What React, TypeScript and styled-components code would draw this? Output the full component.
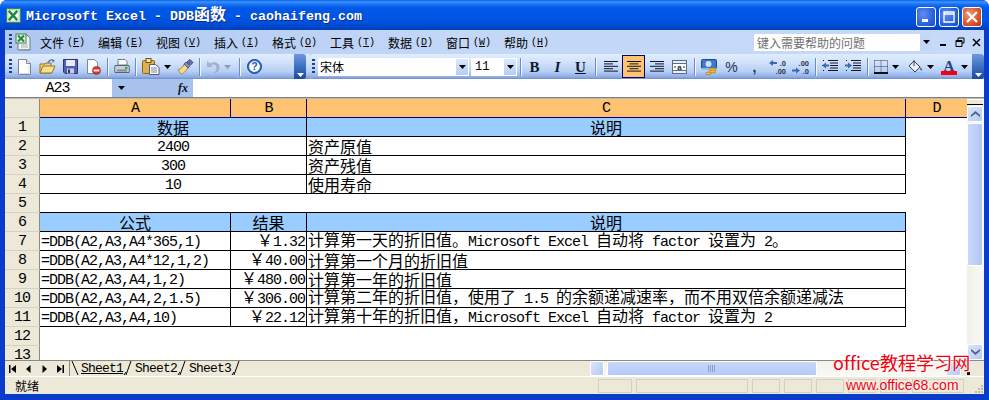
import React from 'react';
import styled, { createGlobalStyle } from 'styled-components';

const GlobalStyle = createGlobalStyle`
	html, body {
		margin: 0;
		width: 989px;
		height: 400px;
		overflow: hidden;
		background: #fff;
	}
`;

const CJK = '"Noto Sans CJK SC", "Liberation Sans", sans-serif';
const MONO = '"Liberation Mono", "Noto Sans CJK SC", monospace';
const BLUE_EDGE = '#0a3ccb';
const BEIGE = '#ece9d8';

/* ---------- window frame ---------- */

const Window = styled.div`
	position: relative;
	width: 989px;
	height: 400px;
	display: flex;
	flex-direction: column;
	overflow: hidden;
	background: ${BLUE_EDGE};
	border-radius: 7px 7px 0 0;
	font-family: ${CJK};
`;

const TitleBar = styled.div`
	height: 30px;
	flex: none;
	display: flex;
	align-items: center;
	padding: 0 7px 0 6px;
	background: linear-gradient(
		180deg,
		#0a5fe6 0,
		#3c95ff 2px,
		#1c74f4 4px,
		#0058e6 8px,
		#0054e3 20px,
		#0049cf 26px,
		#003fb8 30px
	);
`;

const TitleText = styled.div`
	flex: 1;
	margin-left: 5px;
	color: #fff;
	font-weight: bold;
	font-size: 16px;
	line-height: 20px;
	white-space: pre;
	text-shadow: 1px 1px 0 #0c2a8e;
`;

const WinButtons = styled.div`
	display: flex;
	gap: 3px;
	margin-top: 3px;
`;

const WinButton = styled.div<{ $close?: boolean }>`
	width: 20px;
	height: 20px;
	box-sizing: border-box;
	border: 1px solid #fff;
	border-radius: 3px;
	display: flex;
	align-items: center;
	justify-content: center;
	background: ${p =>
		p.$close
			? 'radial-gradient(circle at 35% 35%, #ee9a7c, #d9532b 60%, #bb3512)'
			: 'radial-gradient(circle at 35% 35%, #5d8ff5, #2b62e0 60%, #1c49c4)'};
`;

const Body = styled.div`
	flex: 1;
	min-height: 0;
	display: flex;
	flex-direction: column;
	margin: 0 5px 6px 5px;
	background: #fff;
`;

/* ---------- menu bar ---------- */

const MenuBar = styled.div`
	height: 24px;
	flex: none;
	display: flex;
	align-items: center;
	padding-left: 4px;
	background: linear-gradient(90deg, #aec7f0 0, #c3d7f7 45%, #c6d9f8 100%);
	font-size: 12px;
	color: #000;
`;

const Grip = styled.span<{ $after?: number }>`
	flex: none;
	width: 3px;
	height: 16px;
	margin-right: ${p => p.$after ?? 1}px;
	background: repeating-linear-gradient(180deg, #27417e 0 2px, transparent 2px 4px);
`;

const MenuList = styled.div`
	display: flex;
	margin-left: 8px;
`;

const MenuItem = styled.div`
	width: 58px;
	flex: none;
	display: flex;
	align-items: center;
	white-space: pre;
`;

const MenuKey = styled.span`
	margin-left: 3px;
	font-family: ${MONO};
	font-size: 10px;
`;

const MenuKeyLetter = styled.span`
	text-decoration: underline;
`;

const HelpBox = styled.div`
	width: 178px;
	height: 17px;
	margin-left: auto;
	display: flex;
	align-items: center;
	justify-content: space-between;
	background: #fff;
	color: #6f6f6f;
	font-size: 12px;
	line-height: 17px;
	padding-left: 3px;
	box-sizing: border-box;
`;

const HelpArrow = styled.div`
	width: 12px;
	height: 17px;
	background: #c3d7f7;
	display: flex;
	align-items: center;
	justify-content: center;
`;

const DocButtons = styled.div`
	width: 52px;
	flex: none;
	display: flex;
	align-items: center;
	justify-content: space-around;
	padding-left: 3px;
	box-sizing: border-box;
`;

/* ---------- tool bars ---------- */

const Dock = styled.div`
	height: 25px;
	flex: none;
	display: flex;
	background: #a9c3ee;
`;

const ToolBar = styled.div<{ $width: number; $pad: number }>`
	width: ${p => p.$width}px;
	flex: none;
	box-sizing: border-box;
	display: flex;
	align-items: center;
	padding-left: ${p => p.$pad}px;
	border-radius: 3px 0 0 3px;
	background: linear-gradient(180deg, #e0edfe 0, #cfe1fb 35%, #b6cff5 70%, #8fade3 92%, #6e8ecb 100%);
`;

const Tool = styled.div<{ $width?: number; $on?: boolean }>`
	width: ${p => p.$width ?? 23}px;
	height: 23px;
	flex: none;
	box-sizing: border-box;
	display: flex;
	align-items: center;
	justify-content: center;
	gap: 4px;
	border: 1px solid ${p => (p.$on ? '#000080' : 'transparent')};
	background: ${p => (p.$on ? '#ffc26f' : 'none')};
`;

const ToolSep = styled.div<{ $width?: number }>`
	width: ${p => p.$width ?? 5}px;
	height: 18px;
	flex: none;
	display: flex;
	justify-content: center;
	&::before {
		content: '';
		width: 1px;
		background: #6a8cc8;
		box-shadow: 1px 0 0 #f0f6ff;
	}
`;

const Chevron = styled.div<{ $right?: number }>`
	width: 12px;
	height: 25px;
	flex: none;
	margin-left: auto;
	margin-right: ${p => p.$right ?? 0}px;
	display: flex;
	flex-direction: column;
	align-items: center;
	justify-content: flex-end;
	padding-bottom: 2px;
	box-sizing: border-box;
	border-radius: 0 3px 3px 0;
	background: linear-gradient(180deg, #6f99de 0, #3a6cc0 55%, #1c4a9c 100%);
`;

const Combo = styled.div<{ $width: number; $after?: number }>`
	width: ${p => p.$width}px;
	margin-right: ${p => p.$after ?? 0}px;
	height: 18px;
	flex: none;
	box-sizing: border-box;
	display: flex;
	align-items: center;
	justify-content: space-between;
	background: #fff;
	font-size: 12px;
	padding-left: 2px;
`;

const ComboNumber = styled.span`
	font-family: ${MONO};
	font-size: 12px;
	margin-left: 2px;
`;

const ComboArrow = styled.div`
	width: 12px;
	height: 16px;
	margin-right: 1px;
	background: linear-gradient(180deg, #dbe8fc, #b4cdf4);
	display: flex;
	align-items: center;
	justify-content: center;
`;

const StyleLetter = styled.span<{ $italic?: boolean; $under?: boolean }>`
	font-family: "Liberation Serif", serif;
	font-size: 15px;
	line-height: 16px;
	font-weight: bold;
	font-style: ${p => (p.$italic ? 'italic' : 'normal')};
	text-decoration: ${p => (p.$under ? 'underline' : 'none')};
	color: #10182c;
`;

const SansGlyph = styled.span<{ $strong?: boolean }>`
	font-family: "Liberation Sans", sans-serif;
	font-size: 14px;
	font-weight: ${p => (p.$strong ? 'bold' : 'normal')};
	color: #24324f;
`;

/* ---------- formula bar ---------- */

const FormulaBar = styled.div`
	height: 18px;
	flex: none;
	display: flex;
	background: #fff;
	border-bottom: 1px solid #808080;
	box-shadow: 0 1px 0 #bdbab0;
	position: relative;
`;

const NameBox = styled.div`
	width: 107px;
	flex: none;
	display: flex;
	align-items: center;
	justify-content: center;
	padding-right: 2px;
	box-sizing: border-box;
`;

const NameTools = styled.div`
	width: 81px;
	flex: none;
	display: flex;
	align-items: center;
	justify-content: space-between;
	padding: 0 5px 0 6px;
	box-sizing: border-box;
	background: #a8c2ee;
`;

const FxLabel = styled.span`
	font-family: "Liberation Serif", serif;
	font-style: italic;
	font-weight: bold;
	font-size: 12px;
	color: #111;
`;

/* ---------- sheet ---------- */

const SheetArea = styled.div`
	flex: 1;
	min-height: 0;
	display: flex;
	margin-top: 1px;
`;

const Grid = styled.div`
	flex: 1;
	min-width: 0;
	display: grid;
	grid-template-columns: 35px 191px 76px 599px 61px;
	grid-auto-rows: 19px;
	overflow: hidden;
	align-content: start;
`;

const ColHead = styled.div<{ $line?: boolean }>`
	box-sizing: border-box;
	background: #ffc271;
	border-bottom: 1px solid #000080;
	border-right: ${p => (p.$line ? '1px solid #000080' : 'none')};
	display: flex;
	align-items: center;
	justify-content: center;
	white-space: pre;
`;

const Corner = styled.div`
	box-sizing: border-box;
	background: ${BEIGE};
	border-right: 1px solid #8d8a7c;
	border-bottom: 1px solid #d5d2c3;
`;

const RowHead = styled(Corner)`
	display: flex;
	align-items: center;
	justify-content: center;
	white-space: pre;
`;

const Cell = styled.div<{ $span?: number; $fill?: boolean; $align?: string; $right?: boolean; $bottom?: boolean }>`
	grid-column: span ${p => p.$span ?? 1};
	box-sizing: border-box;
	min-width: 0;
	background: ${p => (p.$fill ? '#99ccff' : '#fff')};
	border-right: ${p => (p.$right === false ? 'none' : '1px solid #000')};
	border-bottom: ${p => (p.$bottom === false ? 'none' : '1px solid #000')};
	display: flex;
	align-items: center;
	padding: 0 1px;
	justify-content: ${p => p.$align ?? 'flex-start'};
	font-size: 16px;
	line-height: 18px;
	white-space: pre;
	overflow: hidden;
`;

const Latin = styled.span<{ $size?: number; $track?: number }>`
	font-family: ${MONO};
	font-size: ${p => p.$size ?? 15}px;
	letter-spacing: ${p => p.$track ?? -1}px;
`;

const Han = styled.span`
	font-family: ${CJK};
	font-size: 16px;
`;

/* ---------- scroll bars ---------- */

const VScroll = styled.div`
	width: 17px;
	flex: none;
	display: flex;
	flex-direction: column;
	background: linear-gradient(90deg, #f1f0e8, #faf9f4);
	padding-right: 1px;
	box-sizing: border-box;
`;

const SplitBox = styled.div`
	height: 6px;
	flex: none;
	background: ${BEIGE};
	border-top: 1px solid #fff;
	border-bottom: 1px solid #000;
	box-sizing: border-box;
	margin-bottom: 1px;
`;

const ScrollBtn = styled.div<{ $w?: number; $h?: number }>`
	width: ${p => (p.$w ? `${p.$w}px` : '100%')};
	height: ${p => (p.$h ? `${p.$h}px` : '100%')};
	flex: none;
	box-sizing: border-box;
	border: 1px solid #fff;
	border-radius: 2px;
	background: linear-gradient(135deg, #dbe6fc, #b3c9f4);
	display: flex;
	align-items: center;
	justify-content: center;
`;

const VThumb = styled.div`
	height: 143px;
	flex: none;
	margin-top: 1px;
	box-sizing: border-box;
	border: 1px solid #fff;
	border-radius: 2px;
	background: linear-gradient(90deg, #c9d8fa, #bacdf8 70%, #afc3f2);
`;

const Spacer = styled.div`
	flex: 1;
`;

const TabRow = styled.div`
	height: 17px;
	flex: none;
	display: flex;
	align-items: center;
	box-sizing: border-box;
	background: ${BEIGE};
	border-top: 1px solid #8d8a7c;
	border-bottom: 1px solid #fff;
`;

const TabNav = styled.div`
	width: 65px;
	height: 100%;
	flex: none;
	display: flex;
	align-items: center;
	justify-content: space-around;
	padding: 0 1px 0 0;
	box-sizing: border-box;
	border-right: 1px solid #8d8a7c;
`;

const SheetTab = styled.div<{ $active?: boolean }>`
	width: 42px;
	flex: none;
	font-family: ${MONO};
	font-size: 13px;
	letter-spacing: -0.8px;
	line-height: 15px;
	text-decoration: ${p => (p.$active ? 'underline' : 'none')};
`;

const SlashSvg = styled.svg`
	flex: none;
`;

const HScroll = styled.div`
	margin-left: auto;
	width: 394px;
	height: 15px;
	flex: none;
	display: flex;
	align-items: center;
	background: linear-gradient(180deg, #f2f1ea, #faf9f5);
`;

const HThumb = styled.div`
	width: 210px;
	height: 15px;
	flex: none;
	margin-left: 3px;
	box-sizing: border-box;
	border: 1px solid #fff;
	border-radius: 2px;
	background: linear-gradient(180deg, #c9d8fa, #b4c9f6);
	display: flex;
	align-items: center;
	justify-content: center;
`;

const HRest = styled.div`
	width: 129px;
	flex: none;
`;

const Corner2 = styled.div`
	width: 23px;
	height: 15px;
	flex: none;
	background: ${BEIGE};
	display: flex;
	align-items: flex-end;
`;

/* ---------- status bar ---------- */

const StatusBar = styled.div`
	height: 17px;
	flex: none;
	display: flex;
	align-items: center;
	background: ${BEIGE};
	font-size: 12px;
	padding-left: 10px;
	position: relative;
`;

const StatusPanels = styled.div`
	margin-left: auto;
	height: 14px;
	display: flex;
	gap: 4px;
	margin-right: 20px;
`;

const StatusPanel = styled.div<{ $width: number }>`
	width: ${p => p.$width}px;
	box-sizing: border-box;
	border: 1px solid #d3d1c6;
`;

const ResizeGrip = styled.svg`
	position: absolute;
	right: 0;
	bottom: 0;
`;

const Watermark = styled.div`
	position: absolute;
	left: 833px;
	top: 350px;
	color: #f00012;
	text-shadow: 0 0 2px #fff, 0 0 2px #fff;
	font-family: ${CJK};
	pointer-events: none;
`;

const WatermarkName = styled.div`
	font-size: 18px;
	line-height: 24px;
	letter-spacing: 0.1px;
`;

const WatermarkUrl = styled.div`
	font-family: "Liberation Sans", sans-serif;
	font-size: 14px;
	line-height: 16px;
	margin: 3px 0 0 13px;
`;

/* ---------- small helpers ---------- */

function Mixed({ text, size, track }: { text: string; size?: number; track?: number }) {
	const parts = text.split(/([\u2E80-\uFFFF]+)/).filter(Boolean);
	return (
		<span>
			{parts.map((part, i) =>
				/[\u2E80-\uFFFF]/.test(part) ? (
					<Han key={i}>{part}</Han>
				) : (
					<Latin key={i} $size={size} $track={track}>
						{part}
					</Latin>
				)
			)}
		</span>
	);
}

const DownTri = ({ color = '#000' }: { color?: string }) => (
	<svg width="7" height="4" viewBox="0 0 7 4">
		<path d="M0 0h7L3.5 4z" fill={color} />
	</svg>
);

const ExcelIcon = ({ size = 16 }: { size?: number }) => (
	<svg width={size} height={size} viewBox="0 0 16 16">
		<rect x="0.5" y="0.5" width="15" height="15" fill="#eef6ea" stroke="#3f7f4a" />
		<rect x="2" y="2" width="12" height="12" fill="#fff" stroke="#9cc4a0" />
		<path d="M3 3l9 10M12 3L3 13" stroke="#1f8a3c" strokeWidth="2.6" />
	</svg>
);

const SheetMenuIcon = () => (
	<svg width="17" height="18" viewBox="0 0 17 18">
		<path d="M3 2h9l3 3v12H3z" fill="#f4f4ee" stroke="#6f7a8c" />
		<path d="M5 16h10v1H5z" fill="#8b95a8" />
		<rect x="1" y="1" width="10" height="9" fill="#e7f3e5" stroke="#3f7f4a" />
		<path d="M3 2.5l6 6M9 2.5l-6 6" stroke="#1f8a3c" strokeWidth="2" />
		<path d="M6 12h7M6 14h7" stroke="#a9b1bd" />
	</svg>
);

const NewIcon = () => (
	<svg width="13" height="16" viewBox="0 0 13 16">
		<path d="M.5.5h8l4 4v11H.5z" fill="#fff" stroke="#7d8796" />
		<path d="M8.5.5v4h4" fill="#dfe6f0" stroke="#7d8796" />
		<path d="M11 6v8.5H2" fill="none" stroke="#d5dbe6" />
	</svg>
);

const OpenIcon = () => (
	<svg width="17" height="16" viewBox="0 0 17 16">
		<path d="M1 5h5l1-1h5v10H1z" fill="#f3cf77" stroke="#98731f" />
		<path d="M1 14l3-7h12l-3 7z" fill="#f8df98" stroke="#98731f" />
		<path d="M9 4c1-3 3-3.4 5-3" fill="none" stroke="#4d7fbf" strokeWidth="1.4" />
		<path d="M13 0l3 1.4L13.6 4z" fill="#4d7fbf" />
	</svg>
);

const SaveIcon = () => (
	<svg width="15" height="15" viewBox="0 0 15 15">
		<path d="M.5.5h14v14H2l-1.5-1.5z" fill="#5160b4" stroke="#2b3479" />
		<rect x="3" y="1" width="9" height="6" fill="#e8ebf6" />
		<rect x="4" y="9.5" width="7" height="5" fill="#c8cde4" />
		<rect x="5" y="10.5" width="2" height="3.5" fill="#2b3479" />
	</svg>
);

const PermissionIcon = () => (
	<svg width="14" height="16" viewBox="0 0 14 16">
		<path d="M.5.5h7l3 3v11H.5z" fill="#fff" stroke="#7d8796" />
		<circle cx="9.5" cy="11.5" r="4" fill="#d93a2b" stroke="#8e1b12" strokeWidth=".6" />
		<rect x="6.7" y="10.6" width="5.6" height="1.8" fill="#fff" />
	</svg>
);

const PrintIcon = () => (
	<svg width="16" height="15" viewBox="0 0 16 15">
		<path d="M4 .5h7l2 2V6H4z" fill="#fff" stroke="#707a8a" />
		<path d="M1 6.5h14c.5 3 .5 5 0 7H1c-.5-2-.5-4 0-7z" fill="#c8ced8" stroke="#596273" />
		<rect x="3" y="10.5" width="10" height="2" fill="#7f8999" />
		<rect x="11" y="8" width="2.5" height="2" fill="#22b03a" />
	</svg>
);

const PasteIcon = () => (
	<svg width="18" height="17" viewBox="0 0 18 17">
		<rect x=".5" y="2.5" width="12" height="13" rx="1" fill="#e0b04f" stroke="#8a661c" />
		<rect x="4" y=".5" width="5" height="4" fill="#f1e4b8" stroke="#6b5416" />
		<path d="M7.5 6.5h6l3.5 3v7H7.5z" fill="#fff" stroke="#565d6d" />
		<path d="M9 10h6M9 12h6M9 14h6" stroke="#7d8796" />
	</svg>
);

const PainterIcon = () => (
	<svg width="17" height="16" viewBox="0 0 17 16">
		<path d="M1 11c3-1 5-3 6-6l4 4c-2 3-5 6-7 6z" fill="#f2dc8f" stroke="#a38a3a" />
		<path d="M7 5l2-2 4 4-2 2z" fill="#8e8fc0" stroke="#555785" />
		<path d="M10 3l3-2.5 3 3L13.5 6z" fill="#6b6fae" stroke="#45477a" />
	</svg>
);

const UndoIcon = () => (
	<svg width="14" height="14" viewBox="0 0 14 14">
		<path d="M1 1v6h6L5 5c3-1.5 5.5 0 5.5 3 0 2-1 3.5-3 5 4 0 6-2.5 6-5.500C13.500 3 9 .5 4 3.500z" fill="#a5b0c6" />
	</svg>
);

const HelpIcon = () => (
	<svg width="15" height="15" viewBox="0 0 15 15">
		<circle cx="7.500" cy="7.500" r="7" fill="#2f6fd8" stroke="#1b458f" />
		<circle cx="7.500" cy="7.500" r="5.400" fill="#fff" />
		<text x="7.500" y="11.300" textAnchor="middle" fontFamily="Liberation Sans" fontWeight="bold" fontSize="10.500" fill="#1c54bd">
			?
		</text>
	</svg>
);

const Lines = ({ mode }: { mode: 'left' | 'center' | 'right' }) => {
	const rows = [14, 9, 14, 9, 14];
	return (
		<svg width="14" height="11" viewBox="0 0 14 11">
			{rows.map((w, i) => {
				const x = mode === 'left' ? 0 : mode === 'right' ? 14 - w : (14 - w) / 2;
				return <rect key={i} x={x} y={i * 2.4} width={w} height="1" fill="#101828" />;
			})}
		</svg>
	);
};

const MergeIcon = () => (
	<svg width="15" height="14" viewBox="0 0 15 14">
		<rect x=".5" y=".5" width="14" height="13" fill="#e8eefa" stroke="#5f6c86" />
		<path d="M1 3.500h13M1 10.500h13" stroke="#5f6c86" />
		<rect x="1" y="4" width="13" height="6" fill="#fff" />
		<path d="M2 7h2M11 7h2" stroke="#1c2a48" />
		<text x="7.500" y="9.500" textAnchor="middle" fontFamily="Liberation Sans" fontWeight="bold" fontSize="8" fill="#1c2a48">
			a
		</text>
	</svg>
);

const CurrencyIcon = () => (
	<svg width="16" height="16" viewBox="0 0 16 16">
		<rect x=".5" y=".5" width="15" height="9" rx="1" fill="#3f78c8" stroke="#274b86" />
		<ellipse cx="7.500" cy="5" rx="3" ry="3" fill="#cfe0f6" />
		<path d="M1 9h14l-2 2H1z" fill="#9bb9e4" />
		<ellipse cx="11.500" cy="10.500" rx="3.500" ry="1.400" fill="#f0c040" stroke="#9a7414" strokeWidth=".6" />
		<ellipse cx="11.500" cy="12.500" rx="3.500" ry="1.400" fill="#f0c040" stroke="#9a7414" strokeWidth=".6" />
		<ellipse cx="7.500" cy="14.300" rx="3" ry="1.200" fill="#f0c040" stroke="#9a7414" strokeWidth=".6" />
	</svg>
);

const DecimalIcon = ({ top, bottom, up }: { top: string; bottom: string; up?: boolean }) => (
	<svg width="17" height="14" viewBox="0 0 17 14">
		<g fontFamily="Liberation Sans" fontWeight="bold" fontSize="7.500" fill="#27344f">
			<text x="17" y="6" textAnchor="end">{top}</text>
			<text x="17" y="13.500" textAnchor="end">{bottom}</text>
		</g>
		{up ? (
			<path d="M0 3l4-3v2h4v2H4v2z" fill="#3c68b4" />
		) : (
			<path d="M8 10.500l-4-3v2H0v2h4v2z" fill="#3c68b4" />
		)}
	</svg>
);

const IndentIcon = ({ out }: { out?: boolean }) => (
	<svg width="16" height="13" viewBox="0 0 16 13">
		<path d="M6 .5h10M8 3h8M8 5.500h8M8 8h8M6 10.500h10" stroke="#101828" />
		<path d="M0 5.500h1" stroke="#101828" />
		{out ? <path d="M0 5.500l4-3v2h3v2H4v2z" fill="#3c68b4" /> : <path d="M7 5.500l-4-3v2H0v2h3v2z" fill="#3c68b4" />}
		<path d="M1 .5h2M1 10.500h2" stroke="#101828" strokeDasharray="1 1" />
	</svg>
);

const BorderIcon = () => (
	<svg width="14" height="14" viewBox="0 0 14 14">
		<path d="M.5.5h13v12M.5.500v12M7 .5v12M.5 6.500h13" fill="none" stroke="#3a3f4a" strokeDasharray="1 1" />
		<rect x="0" y="12" width="14" height="2" fill="#111" />
	</svg>
);

const FillIcon = () => (
	<svg width="16" height="16" viewBox="0 0 16 16">
		<path d="M7 2l6 6-5 5-6-6z" fill="#e9edf4" stroke="#3a4358" />
		<path d="M7 1v6" stroke="#3a4358" />
		<path d="M13.500 8c1.300 1.800 1.800 3 1 3.500-1 .3-1.500-1.500-1-3.500z" fill="#3a4358" />
		<rect x="0" y="13" width="16" height="3" fill="#96c3f2" />
	</svg>
);

const FontColorIcon = () => (
	<svg width="16" height="16" viewBox="0 0 16 16">
		<text x="8" y="11.500" textAnchor="middle" fontFamily="Liberation Serif" fontWeight="bold" fontSize="15" fill="#24467f">
			A
		</text>
		<rect x="0" y="12" width="16" height="4" fill="#f5000e" />
	</svg>
);

const ScrollArrow = ({ dir }: { dir: 'up' | 'down' }) => (
	<svg width="9" height="6" viewBox="0 0 9 6">
		<path
			d={dir === 'up' ? 'M0 4l4.500-4L9 4v2L4.500 2.500 0 6z' : 'M0 0l4.500 3.500L9 0v2L4.500 6 0 2z'}
			fill="#4d6185"
		/>
	</svg>
);

const NavArrow = ({ kind }: { kind: 'first' | 'prev' | 'next' | 'last' }) => (
	<svg width="7" height="8" viewBox="0 0 7 8">
		{kind === 'first' && <path d="M0 0h1.500v8H0zM7 0v8L2 4z" fill="#000" />}
		{kind === 'prev' && <path d="M5.500 0v8L1 4z" fill="#000" />}
		{kind === 'next' && <path d="M1.500 0v8L6 4z" fill="#000" />}
		{kind === 'last' && <path d="M0 0v8l5-4zM5.500 0H7v8H5.500z" fill="#000" />}
	</svg>
);

const TabSlash = ({ width, first }: { width: number; first?: boolean }) => (
	<SlashSvg width={width} height="15" viewBox={`0 0 ${width} 15`}>
		{first ? (
			<path d="M2 0l6 14" stroke="#000" fill="none" />
		) : (
			<path d="M8 0L3 14M1 14l2-3" stroke="#000" fill="none" />
		)}
	</SlashSvg>
);

/* ---------- data ---------- */

const MENUS: [string, string][] = [
	['文件', 'F'],
	['编辑', 'E'],
	['视图', 'V'],
	['插入', 'I'],
	['格式', 'O'],
	['工具', 'T'],
	['数据', 'D'],
	['窗口', 'W'],
	['帮助', 'H'],
];

const FORMULAS: [string, string, string][] = [
	['=DDB(A2,A3,A4*365,1)', '￥1.32', '计算第一天的折旧值。Microsoft Excel 自动将 factor 设置为 2。'],
	['=DDB(A2,A3,A4*12,1,2)', '￥40.00', '计算第一个月的折旧值'],
	['=DDB(A2,A3,A4,1,2)', '￥480.00', '计算第一年的折旧值'],
	['=DDB(A2,A3,A4,2,1.5)', '￥306.00', '计算第二年的折旧值，使用了 1.5 的余额递减速率，而不用双倍余额递减法'],
	['=DDB(A2,A3,A4,10)', '￥22.12', '计算第十年的折旧值，Microsoft Excel 自动将 factor 设置为 2'],
];

const INPUTS: [string, string][] = [
	['2400', '资产原值'],
	['300', '资产残值'],
	['10', '使用寿命'],
];

const STATUS_WIDTHS = [34, 112, 28, 28, 28, 28, 28, 52];

export default function App() {
	return (
		<Window>
			<GlobalStyle />
			<TitleBar>
				<ExcelIcon size={15} />
				<TitleText>
					<Mixed text="Microsoft Excel - DDB函数 - caohaifeng.com" size={13.33} track={0} />
				</TitleText>
				<WinButtons>
					<WinButton>
						<svg width="12" height="12" viewBox="0 0 12 12">
							<rect x="2" y="8" width="6" height="3" fill="#fff" />
						</svg>
					</WinButton>
					<WinButton>
						<svg width="12" height="12" viewBox="0 0 12 12">
							<path d="M1 1h10v10H1z M1 3h10" fill="none" stroke="#fff" strokeWidth="1.400" />
						</svg>
					</WinButton>
					<WinButton $close>
						<svg width="12" height="12" viewBox="0 0 12 12">
							<path d="M1 1l10 10M11 1L1 11" stroke="#fff" strokeWidth="2.200" />
						</svg>
					</WinButton>
				</WinButtons>
			</TitleBar>

			<Body>
				<MenuBar>
					<Grip $after={3} />
					<SheetMenuIcon />
					<MenuList>
						{MENUS.map(([label, key]) => (
							<MenuItem key={key}>
								{label}
								<MenuKey>
									(<MenuKeyLetter>{key}</MenuKeyLetter>)
								</MenuKey>
							</MenuItem>
						))}
					</MenuList>
					<HelpBox>
						键入需要帮助的问题
						<HelpArrow>
							<DownTri />
						</HelpArrow>
					</HelpBox>
					<DocButtons>
						<svg width="9" height="9" viewBox="0 0 9 9">
							<rect x="1" y="6" width="6" height="2" fill="#000" />
						</svg>
						<svg width="10" height="10" viewBox="0 0 10 10">
							<path d="M3 3V1h6v5H7M1 3.500h6v6H1zM1 4.500h6" fill="none" stroke="#000" />
						</svg>
						<svg width="9" height="9" viewBox="0 0 9 9">
							<path d="M1 1l7 7M8 1L1 8" stroke="#000" strokeWidth="1.500" />
						</svg>
					</DocButtons>
				</MenuBar>

				<Dock>
					<ToolBar $width={305} $pad={4}>
						<Grip />
						<Tool><NewIcon /></Tool>
						<Tool><OpenIcon /></Tool>
						<Tool><SaveIcon /></Tool>
						<Tool><PermissionIcon /></Tool>
						<ToolSep />
						<Tool><PrintIcon /></Tool>
						<ToolSep />
						<Tool $width={36}><PasteIcon /><DownTri /></Tool>
						<Tool><PainterIcon /></Tool>
						<ToolSep />
						<Tool $width={33}><UndoIcon /><DownTri color="#8d9ab5" /></Tool>
						<ToolSep $width={8} />
						<Tool><HelpIcon /></Tool>
						<Chevron $right={4}>
							<DownTri color="#fff" />
						</Chevron>
					</ToolBar>
					<ToolBar $width={674} $pad={2}>
						<Grip $after={3} />
						<Combo $width={151} $after={2}>
							宋体
							<ComboArrow><DownTri /></ComboArrow>
						</Combo>
						<Combo $width={46}>
							<ComboNumber>11</ComboNumber>
							<ComboArrow><DownTri /></ComboArrow>
						</Combo>
						<ToolSep $width={6} />
						<Tool><StyleLetter>B</StyleLetter></Tool>
						<Tool><StyleLetter $italic>I</StyleLetter></Tool>
						<Tool><StyleLetter $under>U</StyleLetter></Tool>
						<ToolSep $width={7} />
						<Tool><Lines mode="left" /></Tool>
						<Tool $on><Lines mode="center" /></Tool>
						<Tool><Lines mode="right" /></Tool>
						<Tool><MergeIcon /></Tool>
						<ToolSep $width={6} />
						<Tool><CurrencyIcon /></Tool>
						<Tool><SansGlyph>%</SansGlyph></Tool>
						<Tool><SansGlyph $strong>,</SansGlyph></Tool>
						<Tool><DecimalIcon top=".0" bottom=".00" up /></Tool>
						<Tool><DecimalIcon top=".00" bottom=".0" /></Tool>
						<ToolSep $width={6} />
						<Tool><IndentIcon out /></Tool>
						<Tool><IndentIcon /></Tool>
						<ToolSep $width={6} />
						<Tool $width={33}><BorderIcon /><DownTri /></Tool>
						<Tool $width={34}><FillIcon /><DownTri /></Tool>
						<Tool $width={34}><FontColorIcon /><DownTri /></Tool>
						<Chevron>
							<DownTri color="#fff" />
						</Chevron>
					</ToolBar>
				</Dock>

				<FormulaBar>
					<NameBox><Latin>A23</Latin></NameBox>
					<NameTools>
						<DownTri />
						<FxLabel>fx</FxLabel>
					</NameTools>
				</FormulaBar>

				<SheetArea>
					<Grid>
						<Corner />
						<ColHead $line><Latin>A</Latin></ColHead>
						<ColHead $line><Latin>B</Latin></ColHead>
						<ColHead $line><Latin>C</Latin></ColHead>
						<ColHead><Latin>D</Latin></ColHead>

						<RowHead><Latin>1</Latin></RowHead>
						<Cell $span={2} $fill $align="center"><Mixed text="数据" /></Cell>
						<Cell $fill $align="center"><Mixed text="说明" /></Cell>
						<Cell $right={false} $bottom={false} />

						{INPUTS.map(([value, note], i) => (
							<React.Fragment key={note}>
								<RowHead><Latin>{i + 2}</Latin></RowHead>
								<Cell $span={2} $align="center"><Mixed text={value} /></Cell>
								<Cell><Mixed text={note} /></Cell>
								<Cell $right={false} $bottom={false} />
							</React.Fragment>
						))}

						<RowHead><Latin>5</Latin></RowHead>
						<Cell $span={3} $right={false} />
						<Cell $right={false} $bottom={false} />

						<RowHead><Latin>6</Latin></RowHead>
						<Cell $fill $align="center"><Mixed text="公式" /></Cell>
						<Cell $fill $align="center"><Mixed text="结果" /></Cell>
						<Cell $fill $align="center"><Mixed text="说明" /></Cell>
						<Cell $right={false} $bottom={false} />

						{FORMULAS.map(([formula, result, note], i) => (
							<React.Fragment key={formula}>
								<RowHead><Latin>{i + 7}</Latin></RowHead>
								<Cell><Mixed text={formula} /></Cell>
								<Cell $align="flex-end"><Mixed text={result} /></Cell>
								<Cell><Mixed text={note} /></Cell>
								<Cell $right={false} $bottom={false} />
							</React.Fragment>
						))}

						{[12, 13].map(n => (
							<React.Fragment key={n}>
								<RowHead><Latin>{n}</Latin></RowHead>
								<Cell $span={4} $right={false} $bottom={false} />
							</React.Fragment>
						))}
					</Grid>

					<VScroll>
						<SplitBox />
						<ScrollBtn $h={16}><ScrollArrow dir="up" /></ScrollBtn>
						<VThumb />
						<Spacer />
						<ScrollBtn $h={16}><ScrollArrow dir="down" /></ScrollBtn>
					</VScroll>
				</SheetArea>

				<TabRow>
					<TabNav>
						<NavArrow kind="first" />
						<NavArrow kind="prev" />
						<NavArrow kind="next" />
						<NavArrow kind="last" />
					</TabNav>
					<TabSlash width={11} first />
					<SheetTab $active>Sheet1</SheetTab>
					<TabSlash width={12} />
					<SheetTab>Sheet2</SheetTab>
					<TabSlash width={12} />
					<SheetTab>Sheet3</SheetTab>
					<TabSlash width={12} />
					<HScroll>
						<ScrollBtn $w={14} $h={15} />
						<HThumb>
							<svg width="8" height="7" viewBox="0 0 8 7">
								<path d="M.5 0v7M2.500 0v7M4.500 0v7M6.500 0v7" stroke="#8aa0cc" />
							</svg>
						</HThumb>
						<HRest />
						<ScrollBtn $w={15} $h={15} />
						<Corner2>
							<svg width="10" height="6" viewBox="0 0 10 6">
								<rect x="6" y="2" width="3" height="3" fill="#111" />
							</svg>
						</Corner2>
					</HScroll>
				</TabRow>

				<StatusBar>
					就绪
					<StatusPanels>
						{STATUS_WIDTHS.map((w, i) => (
							<StatusPanel key={i} $width={w} />
						))}
					</StatusPanels>
					<ResizeGrip width="10" height="10" viewBox="0 0 10 10">
						<path d="M7 1h2v2H7zM4 4h2v2H4zM7 4h2v2H7zM1 7h2v2H1zM4 7h2v2H4zM7 7h2v2H7z" fill="#bdb9a6" />
					</ResizeGrip>
				</StatusBar>
			</Body>

			<Watermark>
				<WatermarkName>office教程学习网</WatermarkName>
				<WatermarkUrl>www.office68.com</WatermarkUrl>
			</Watermark>
		</Window>
	);
}
